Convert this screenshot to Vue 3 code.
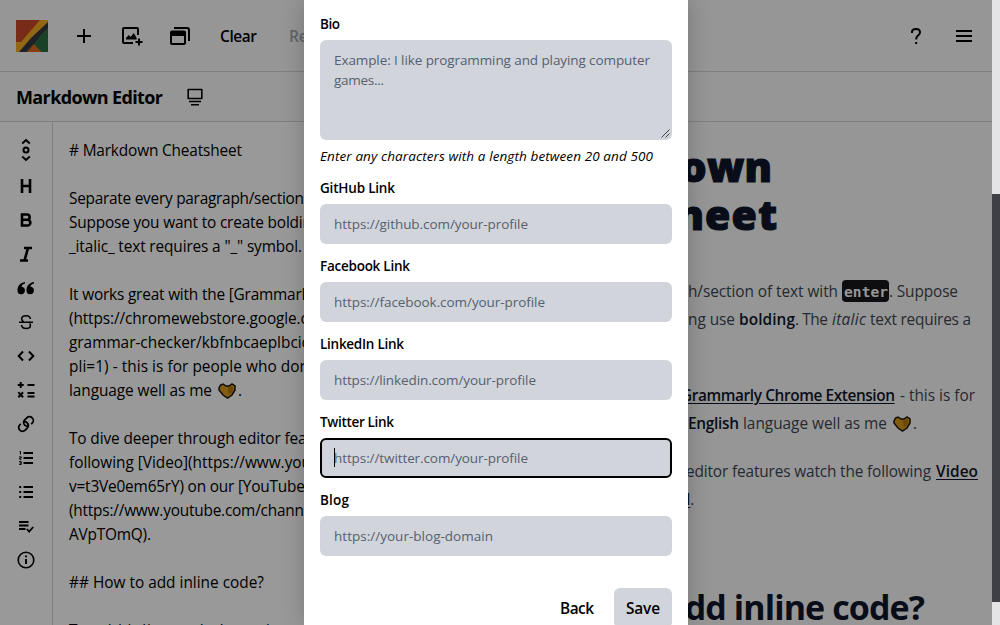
<script setup>
const vFit = {
  mounted(el, { value }) {
    if (!value) return
    const n = el.textContent.length
    const w = el.getBoundingClientRect().width
    el.style.letterSpacing = (value - w) / Math.max(n - 1, 1) + 'px'
    el.style.width = value + 'px'
  },
}
const lines = [
  ['# Markdown Cheatsheet', 173], [], ['Separate every paragraph/section', 235],
  ['Suppose you want to create boldin', 243], ['_italic_ text requires a "_" symbol.', 233], [],
  ['It works great with the [Grammarly', 244], ['(https://chromewebstore.google.co', 248],
  ['grammar-checker/kbfnbcaeplbcic', 240], ["pli=1) - this is for people who don't", 249],
  ['language well as me', 143, 1], [], ['To dive deeper through editor feat', 243],
  ['following [Video](https://www.you', 242], ['v=t3Ve0em65rY) on our [YouTube', 236],
  ['(https://www.youtube.com/chann', 235], ['AVpTOmQ).', 82], [], ['## How to add inline code?', 195], [],
  ['To add inline code (some)', 202],
]
const fields = [
  ['GitHub Link', 75, 'https://github.com/your-profile', 194],
  ['Facebook Link', 90, 'https://facebook.com/your-profile', 211],
  ['LinkedIn Link', 84, 'https://linkedin.com/your-profile', 202],
  ['Twitter Link', 74, 'https://twitter.com/your-profile', 194],
  ['Blog', 29, 'https://your-blog-domain', 159],
]
</script>

<template>
  <div class="screen">
    <div class="page">
      <header class="top">
        <svg class="logo" viewBox="0 0 32 32">
          <rect width="32" height="32" fill="#387946" />
          <path d="M0 0H26L3 24 0 22Z" fill="#c94a27" />
          <path d="M24 0H32V3L4 32H0V22H5Z" fill="#f3ac22" />
          <path d="M32 2V8L25 15 18 24 10 32H3L15 18Z" fill="#353740" />
          <path d="M11 32L18 24L26 32Z" fill="#e06a20" />
          <path d="M18 24L32 9V32H26Z" fill="#2b6d44" />
        </svg>
        <svg class="ic plus" viewBox="0 0 24 24"><path d="M12 5v14M5 12h14" /></svg>
        <svg class="ic image" viewBox="0 0 24 24">
          <path d="M18 11V5q0-1-1-1H4Q3 4 3 5v13q0 1 1 1h9M19 14.500v7M15.500 18h7" />
          <path class="fill" d="M6 15.500V14l2.600-3 2 2 3.200-4 2.800 5v1.500Z" />
        </svg>
        <svg class="ic stack" viewBox="0 0 24 24">
          <path d="M3 8.500q0-1 1-1h12q1 0 1 1V19q0 1-1 1H4q-1 0-1-1ZM6 4h13q2 0 2 2v11" />
          <path class="fill" d="M3 7.500h14V12H3Z" />
        </svg>
        <span class="clear"><span v-fit="37" class="t">Clear</span></span>
        <span class="reset">Reset</span>
        <span class="grow"></span>
        <svg class="ic help" viewBox="0 0 24 24"><path d="M8 9V8q0-3 4-3t4 3.400c0 2-1.500 2.500-2.700 3.800-.8.8-1.100 1.400-1.100 3.200M11.200 19h2" /></svg>
        <svg class="ic menu" viewBox="0 0 24 24"><path d="M4 7h16M4 12h16M4 17h16" /></svg>
      </header>
      <div class="title">
        <span v-fit="147" class="t">Markdown Editor</span>
        <svg class="ic" viewBox="0 0 24 24">
          <path class="thin" d="M5.200 4.500h13.600v9H5.200ZM6 16.500h12M8 19.800h8" stroke-linejoin="round" />
        </svg>
      </div>
      <div class="work">
        <nav class="tools">
          <svg class="ic" viewBox="0 0 24 24"><path d="M8.200 5.500 12 2l3.800 3.500M8.200 18.500 12 22l3.800-3.500" /><circle cx="12" cy="12" r="2.500" /></svg>
          <svg class="ic" viewBox="0 0 24 24"><path class="bold" d="M8 5v14M16 5v14M8 12h8" /></svg>
          <svg class="ic" viewBox="0 0 24 24"><path class="bold" d="M8 6.500h5a2.600 2.600 0 0 1 0 5.300H8h5.500a2.800 2.800 0 0 1 0 5.700H8Z" /></svg>
          <svg class="ic" viewBox="0 0 24 24"><path class="bold" d="M10 6h8M6 18.500h8M14 6l-3.500 12.500" /></svg>
          <svg class="ic" viewBox="0 0 24 24">
            <path class="fill" d="M11 6C5 7 3.500 10.800 3.500 14.400A3.700 3.700 0 1 0 7.600 10.800C7.400 9.300 9 8 11 7.400ZM20 6c-6 1-7.500 4.800-7.500 8.400a3.700 3.700 0 1 0 4.100-3.600c-.2-1.500 1.400-2.800 3.400-3.400Z" />
          </svg>
          <svg class="ic" viewBox="0 0 24 24"><path class="thin" d="M16.500 9Q16 5.800 12 5.800q-4.300 0-4.300 3.200 0 1.800 2 2.800M5 12.300h14M7.500 15q.4 3.500 4.700 3.500 4.200 0 4.200-3 0-1-.7-2" /></svg>
          <svg class="ic" viewBox="0 0 24 24"><path d="m9 7.500-4.300 4.500L9 16.500M15 7.500l4.300 4.500-4.300 4.500" /></svg>
          <svg class="ic" viewBox="0 0 24 24"><path d="M6.700 4v6M3.700 7h6M13.500 7h7M4.300 14.300l4.800 4.900M9.100 14.300l-4.800 4.900M13.500 15h7M13.500 18.500h7" /></svg>
          <svg class="ic" viewBox="0 0 24 24"><path class="link" d="M13.800 14.300a4 4 0 0 1-3-1.200 4 4 0 0 1 0-5.300l2-2a3.800 3.800 0 0 1 5.400 5.400l-1 1M10.200 9.700a4 4 0 0 1 3 1.200 4 4 0 0 1 0 5.300l-2 2a3.800 3.800 0 0 1-5.400-5.400l1-1" /></svg>
          <svg class="ic" viewBox="0 0 24 24">
            <path class="link" d="M9.500 7H19M9.500 12H19M9.500 17H19" />
            <path class="hair" d="M5.500 5.500h1v3M5.200 10.800h2v1.200h-1.500v1.300h1.700M5.200 15.500h2v3h-2M5.500 17h1.700" />
          </svg>
          <svg class="ic" viewBox="0 0 24 24"><path class="link" d="M9.500 7H19M9.500 12H19M9.500 17H19M5.200 7h2M5.200 12h2M5.200 17h2" /></svg>
          <svg class="ic" viewBox="0 0 24 24"><path class="link" d="M5 8h9.500M5 11.500h9.500M5 15h6.500M12.800 15l2.400 2.600 4-4.600" /></svg>
          <svg class="ic" viewBox="0 0 24 24"><circle class="thin" cx="12" cy="12" r="7.800" /><path d="M12 11v5M12 7.500v1.800" /></svg>
        </nav>
        <div class="editor">
          <div v-for="(l, i) in lines" :key="i" class="line">
            <span v-if="l[0]" v-fit="l[1]" class="t">{{ l[0] }}</span>
            <template v-if="l[2]">
              <svg class="heart" viewBox="0 0 18 16"><path d="M1 5 2.500 2 5 1 8 3h3l3-2 3 2v4l-3 5-4.500 3L5 12 1 7Z" /><path class="shine" d="m10 4 4-1 1.500 3-2 4-3 1Z" /></svg>.
            </template>
          </div>
        </div>
        <article class="preview">
          <h1><span v-fit="118" class="t">down</span><br /><span v-fit="123" class="t">sheet</span></h1>
          <div class="para">
            <p class="p1"><span v-fit="150" class="t">h/section of text with</span><code><span v-fit="44" class="t">enter</span></code><span v-fit="69" class="t">. Suppose</span></p>
            <p class="p2"><span v-fit="47" class="t">ng use</span><b><span v-fit="56" class="t">bolding</span></b><span v-fit="33" class="t">. The</span><i><span v-fit="34" class="t">italic</span></i><span v-fit="101" class="t">text requires a</span></p>
          </div>
          <div class="para second">
            <p class="p3"><a><span v-fit="214" class="t">Grammarly Chrome Extension</span></a><span v-fit="75" class="t dash">- this is for</span></p>
            <p class="p4"><b><span v-fit="51" class="t">English</span></b><span v-fit="144" class="t">language well as me</span>
              <svg class="heart" viewBox="0 0 18 16"><path d="M1 5 2.500 2 5 1 8 3h3l3-2 3 2v4l-3 5-4.500 3L5 12 1 7Z" /><path class="shine" d="m10 4 4-1 1.500 3-2 4-3 1Z" /></svg><span class="t">.</span></p>
          </div>
          <div class="para third">
            <p class="p5"><span v-fit="245" class="t">editor features watch the following</span><a><span v-fit="42" class="t">Video</span></a></p>
            <p class="p6"><a><span class="t">l</span></a><span class="t">.</span></p>
          </div>
          <h2><span v-fit="260" class="t">add inline code?</span></h2>
        </article>
      </div>
    </div>
    <div class="scroll"><div class="thumb"></div></div>
    <div class="overlay">
      <form class="modal">
        <label><span v-fit="20" class="t">Bio</span></label>
        <div class="box area">
          <div><span v-fit="316" class="t">Example: I like programming and playing computer</span></div>
          <div><span v-fit="50" class="t">games...</span></div>
          <svg class="grip" viewBox="0 0 9 9"><path d="M.5 8.500l8-8M4.500 8.500l4-4" /></svg>
        </div>
        <em><span v-fit="333" class="t">Enter any characters with a length between 20 and 500</span></em>
        <div v-for="f in fields" :key="f[0]" class="field">
          <label><span v-fit="f[1]" class="t">{{ f[0] }}</span></label>
          <div class="box" :class="{ focus: f[0] === 'Twitter Link' }"><span v-fit="f[3]" class="t">{{ f[2] }}</span></div>
        </div>
        <div class="actions">
          <span class="btn"><span v-fit="34" class="t">Back</span></span>
          <span class="btn save"><span v-fit="34" class="t">Save</span></span>
        </div>
      </form>
    </div>
  </div>
</template>

<style>
body { overflow: hidden; }
</style>
<style scoped>
* { box-sizing: border-box; }
.screen { position: relative; display: flex; width: 1000px; height: 625px; overflow: hidden; font: 15.4px/24px "Open Sans", "Noto Sans", sans-serif; color: #000; }
.page { width: 992px; background: #fafafa; }
.t { display: inline-block; white-space: pre; }
.ic { width: 24px; height: 24px; flex: none; fill: none; stroke: #000; stroke-width: 2; }
.fill { fill: #000; stroke: none; }
.thin { stroke-width: 1.6; }
.link { stroke-width: 1.8; }
.hair { stroke-width: 1; }
.bold { stroke-width: 2.6; }
.top { height: 72px; display: flex; align-items: center; padding: 0 16px; border-bottom: 1px solid #d4d4d8; }
.logo { width: 32px; height: 32px; margin-right: 24px; }
.image, .stack { margin-left: 24px; }
.clear { margin-left: 28px; padding-top: 2px; font-weight: 600; }
.reset { margin-left: 32px; padding-top: 2px; font-weight: 600; color: #a5a5aa; }
.grow { flex: 1; }
.menu { margin-left: 24px; }
.title { height: 50px; display: flex; align-items: center; gap: 20px; padding: 0 16px; border-bottom: 1px solid #d4d4d8; font-size: 18px; font-weight: 700; }
.work { display: flex; height: 503px; }
.tools { width: 53px; border-right: 1px solid #d4d4d8; background: #fff; display: flex; flex-direction: column; align-items: center; gap: 10px; padding-top: 16px; }
.tools .ic:first-child { margin-bottom: 2px; }
.editor { width: 470px; flex: none; background: #fff; padding: 17px 16px 0; overflow: hidden; }
.line { height: 24px; display: flex; white-space: pre; }
.heart { width: 18px; height: 16px; margin: 4px 2px 0 6px; fill: #d99b1c; stroke: #1a1408; stroke-width: 1.5; flex: none; }
.shine { fill: #b37706; stroke: none; }
.preview { flex: 1; padding-top: 20px; color: #3f4752; }
h1, h2, p { margin: 0; }
h1 { padding-left: 131px; font-size: 41px; line-height: 48px; font-weight: 800; color: #0f172a; -webkit-text-stroke: 1.2px #0f172a; }
.para { margin-top: 40px; }
.second { margin-top: 48px; }
.third { margin-top: 20px; }
p { height: 28px; display: flex; padding-left: 165px; line-height: 28px; white-space: nowrap; }
b, a { font-weight: 600; color: #0f172a; }
a .t { text-decoration: underline; text-underline-offset: 2px; text-decoration-thickness: 1px; }
code { margin-left: 4px; height: 22px; margin-top: 2px; padding: 0 1px 0 2px; border-radius: 4px; background: #18181b; color: #fafafa; font: 700 14.5px/24px "DejaVu Sans Mono", monospace; }
.p2 b, .p2 i { margin: 0 0 0 4px; }
.p2 i + .t { margin-left: 4px; }
.p3 { padding-left: 158px; }
.p3 .dash { margin-left: 5px; }
.p4 b { margin-right: 4px; }
.p4 .heart { margin-top: 6px; }
.p5 { padding-left: 163px; }
.p5 a { margin-left: 5px; }
.p6 { padding-left: 163px; }
h2 { margin-top: 71px; padding-left: 142px; font-size: 34px; line-height: 44px; color: #0f172a; }
.scroll { width: 8px; background: #e4e4e7; padding-top: 194px; }
.thumb { height: 408px; background: #3f3f46; }
.overlay { position: absolute; inset: 0 8px 0 0; background: rgba(0, 0, 0, .4); display: flex; justify-content: center; }
.modal { width: 384px; padding: 14px 16px 0; background: #fff; box-shadow: 0 0 22px rgba(0, 0, 0, .22); font-size: 13.5px; line-height: 20px; }
label { display: block; height: 20px; margin-bottom: 6px; font-weight: 600; }
.box { height: 40px; padding: 10px 14px; border-radius: 6px; background: #d1d5db; color: #556070; }
.area { height: 100px; position: relative; }
.grip { position: absolute; right: 2px; bottom: 2px; width: 9px; height: 9px; fill: none; stroke: #444; stroke-width: 1; }
em { display: block; height: 20px; margin-top: 6px; }
.field { height: 66px; margin: 12px 0 0; }
.box.focus { border: 2px solid #000; padding: 8px 12px; display: flex; }
.box.focus::before { content: ""; width: 1px; height: 19px; margin-right: -1px; background: #000; }
.actions { display: flex; justify-content: flex-end; gap: 8px; margin-top: 32px; font-size: 15.4px; font-weight: 600; }
.btn { height: 40px; padding: 11px 12px 9px; border-radius: 6px; }
.save { background: #d1d5db; }
</style>
